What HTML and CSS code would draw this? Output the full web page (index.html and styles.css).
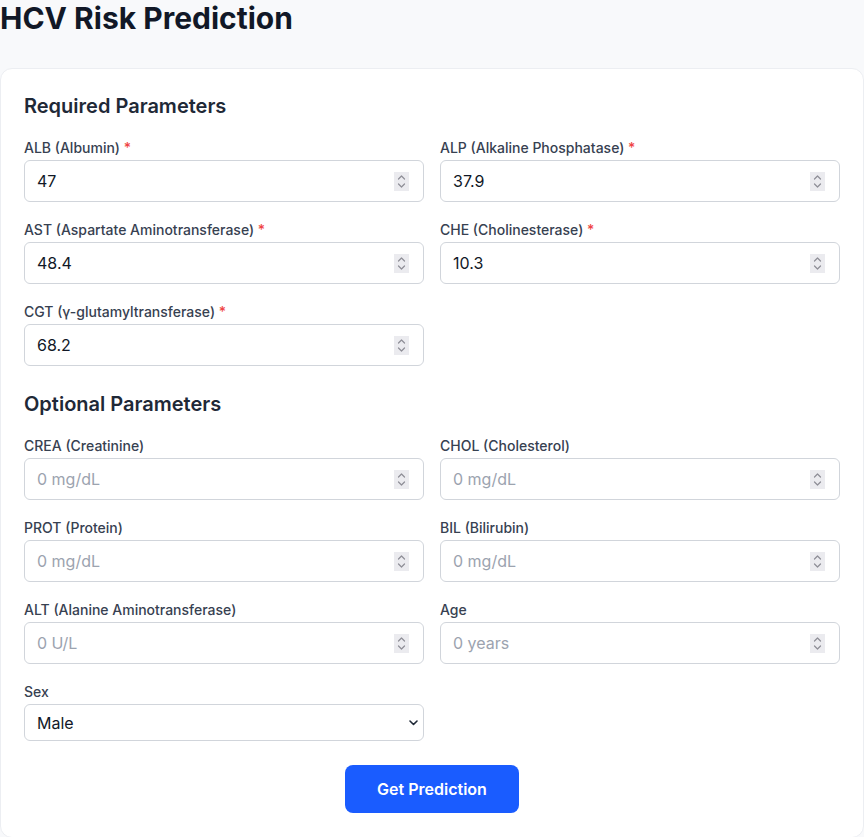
FILE: index.html
```html
<!DOCTYPE html>
<html lang="en">
<head>
<meta charset="utf-8">
<title>HCV Risk Prediction</title>
<link rel="stylesheet" href="styles.css">
</head>
<body>
<h1 class="title">HCV Risk Prediction</h1>
<form class="card">
  <h2 class="section-title">Required Parameters</h2>
  <div class="grid">
    <div class="field">
      <label class="label">ALB (Albumin) <span class="req">*</span></label>
      <div class="input-wrap"><input class="input" type="number" value="47"><span class="spin"><svg width="9" height="15" viewBox="0 0 9 15"><path d="M1.5 5 L4.5 2 L7.5 5 M1.5 10 L4.5 13 L7.5 10" fill="none" stroke="#8e8e96" stroke-width="1.2" stroke-linecap="round" stroke-linejoin="round"/></svg></span></div>
    </div>
    <div class="field">
      <label class="label">ALP (Alkaline Phosphatase) <span class="req">*</span></label>
      <div class="input-wrap"><input class="input" type="number" value="37.9"><span class="spin"><svg width="9" height="15" viewBox="0 0 9 15"><path d="M1.5 5 L4.5 2 L7.5 5 M1.5 10 L4.5 13 L7.5 10" fill="none" stroke="#8e8e96" stroke-width="1.2" stroke-linecap="round" stroke-linejoin="round"/></svg></span></div>
    </div>
    <div class="field">
      <label class="label">AST (Aspartate Aminotransferase) <span class="req">*</span></label>
      <div class="input-wrap"><input class="input" type="number" value="48.4"><span class="spin"><svg width="9" height="15" viewBox="0 0 9 15"><path d="M1.5 5 L4.5 2 L7.5 5 M1.5 10 L4.5 13 L7.5 10" fill="none" stroke="#8e8e96" stroke-width="1.2" stroke-linecap="round" stroke-linejoin="round"/></svg></span></div>
    </div>
    <div class="field">
      <label class="label">CHE (Cholinesterase) <span class="req">*</span></label>
      <div class="input-wrap"><input class="input" type="number" value="10.3"><span class="spin"><svg width="9" height="15" viewBox="0 0 9 15"><path d="M1.5 5 L4.5 2 L7.5 5 M1.5 10 L4.5 13 L7.5 10" fill="none" stroke="#8e8e96" stroke-width="1.2" stroke-linecap="round" stroke-linejoin="round"/></svg></span></div>
    </div>
    <div class="field">
      <label class="label">CGT (γ-glutamyltransferase) <span class="req">*</span></label>
      <div class="input-wrap"><input class="input" type="number" value="68.2"><span class="spin"><svg width="9" height="15" viewBox="0 0 9 15"><path d="M1.5 5 L4.5 2 L7.5 5 M1.5 10 L4.5 13 L7.5 10" fill="none" stroke="#8e8e96" stroke-width="1.2" stroke-linecap="round" stroke-linejoin="round"/></svg></span></div>
    </div>
  </div>

  <h2 class="section-title section-gap">Optional Parameters</h2>
  <div class="grid">
    <div class="field">
      <label class="label">CREA (Creatinine)</label>
      <div class="input-wrap"><input class="input" type="number" placeholder="0 mg/dL"><span class="spin"><svg width="9" height="15" viewBox="0 0 9 15"><path d="M1.5 5 L4.5 2 L7.5 5 M1.5 10 L4.5 13 L7.5 10" fill="none" stroke="#8e8e96" stroke-width="1.2" stroke-linecap="round" stroke-linejoin="round"/></svg></span></div>
    </div>
    <div class="field">
      <label class="label">CHOL (Cholesterol)</label>
      <div class="input-wrap"><input class="input" type="number" placeholder="0 mg/dL"><span class="spin"><svg width="9" height="15" viewBox="0 0 9 15"><path d="M1.5 5 L4.5 2 L7.5 5 M1.5 10 L4.5 13 L7.5 10" fill="none" stroke="#8e8e96" stroke-width="1.2" stroke-linecap="round" stroke-linejoin="round"/></svg></span></div>
    </div>
    <div class="field">
      <label class="label">PROT (Protein)</label>
      <div class="input-wrap"><input class="input" type="number" placeholder="0 mg/dL"><span class="spin"><svg width="9" height="15" viewBox="0 0 9 15"><path d="M1.5 5 L4.5 2 L7.5 5 M1.5 10 L4.5 13 L7.5 10" fill="none" stroke="#8e8e96" stroke-width="1.2" stroke-linecap="round" stroke-linejoin="round"/></svg></span></div>
    </div>
    <div class="field">
      <label class="label">BIL (Bilirubin)</label>
      <div class="input-wrap"><input class="input" type="number" placeholder="0 mg/dL"><span class="spin"><svg width="9" height="15" viewBox="0 0 9 15"><path d="M1.5 5 L4.5 2 L7.5 5 M1.5 10 L4.5 13 L7.5 10" fill="none" stroke="#8e8e96" stroke-width="1.2" stroke-linecap="round" stroke-linejoin="round"/></svg></span></div>
    </div>
    <div class="field">
      <label class="label">ALT (Alanine Aminotransferase)</label>
      <div class="input-wrap"><input class="input" type="number" placeholder="0 U/L"><span class="spin"><svg width="9" height="15" viewBox="0 0 9 15"><path d="M1.5 5 L4.5 2 L7.5 5 M1.5 10 L4.5 13 L7.5 10" fill="none" stroke="#8e8e96" stroke-width="1.2" stroke-linecap="round" stroke-linejoin="round"/></svg></span></div>
    </div>
    <div class="field">
      <label class="label">Age</label>
      <div class="input-wrap"><input class="input" type="number" placeholder="0 years"><span class="spin"><svg width="9" height="15" viewBox="0 0 9 15"><path d="M1.5 5 L4.5 2 L7.5 5 M1.5 10 L4.5 13 L7.5 10" fill="none" stroke="#8e8e96" stroke-width="1.2" stroke-linecap="round" stroke-linejoin="round"/></svg></span></div>
    </div>
    <div class="field">
      <label class="label">Sex</label>
      <div class="input-wrap">
        <select class="select">
          <option>Male</option>
          <option>Female</option>
        </select>
        <svg class="chevron" width="9" height="6" viewBox="0 0 9 6" aria-hidden="true">
          <path d="M1 1 L4.5 4.5 L8 1" fill="none" stroke="#1f2937" stroke-width="1.6" stroke-linecap="round" stroke-linejoin="round"/>
        </svg>
      </div>
    </div>
  </div>

  <div class="actions">
    <button class="btn" type="button">Get Prediction</button>
  </div>
</form>
</body>
</html>
```

FILE: styles.css
```css
* { box-sizing: border-box; }
html, body {
  margin: 0;
  padding: 0;
}
body {
  background: #f8f9fb;
  font-family: Inter, "Noto Sans", sans-serif;
  color: #111827;
  width: 864px;
}
.title {
  margin: 0;
  height: 68px;
  font-size: 30px;
  line-height: 36px;
  font-weight: 700;
  color: #111827;
}
.card {
  background: #ffffff;
  border: 1px solid #eceef2;
  border-radius: 12px;
  padding: 23px 23px 24px;
  width: 864px;
}
.section-title {
  margin: 0 0 16px;
  font-size: 20px;
  line-height: 28px;
  font-weight: 600;
  color: #1f2937;
}
.section-gap { margin-top: 24px; }
.grid {
  display: grid;
  grid-template-columns: 400px 400px;
  column-gap: 16px;
  row-gap: 16px;
}
.field {
  display: flex;
  flex-direction: column;
  gap: 2px;
}
.label {
  padding-top: 2px;
  font-size: 14px;
  line-height: 20px;
  font-weight: 500;
  color: #374151;
}
.req { color: #ef4444; }
.input-wrap {
  position: relative;
}
.input {
  display: block;
  height: 42px;
  width: 100%;
  border: 1px solid #d1d5db;
  border-radius: 6px;
  padding: 0 36px 0 12px;
  font-family: inherit;
  font-size: 16px;
  color: #111827;
  background: #ffffff;
  -moz-appearance: textfield;
}
.input::placeholder { color: #9ca3af; }
.input::-webkit-inner-spin-button,
.input::-webkit-outer-spin-button {
  -webkit-appearance: none;
  margin: 0;
}
.spin {
  position: absolute;
  right: 15px;
  top: 12px;
  width: 15px;
  height: 19px;
  background: #ebebef;
  display: flex;
  align-items: center;
  justify-content: center;
  pointer-events: none;
}
.select {
  display: block;
  height: 37px;
  width: 100%;
  border: 1px solid #d1d5db;
  border-radius: 6px;
  padding: 0 12px;
  font-family: inherit;
  font-size: 16px;
  color: #111827;
  background: #ffffff;
  appearance: none;
  -webkit-appearance: none;
}
.chevron {
  position: absolute;
  right: 6px;
  top: 16px;
  pointer-events: none;
}
.actions {
  display: flex;
  justify-content: center;
  margin-top: 24px;
}
.btn {
  width: 174px;
  height: 48px;
  border: none;
  border-radius: 8px;
  background: #1a5cff;
  color: #ffffff;
  font-family: inherit;
  font-size: 16px;
  font-weight: 600;
}
```
